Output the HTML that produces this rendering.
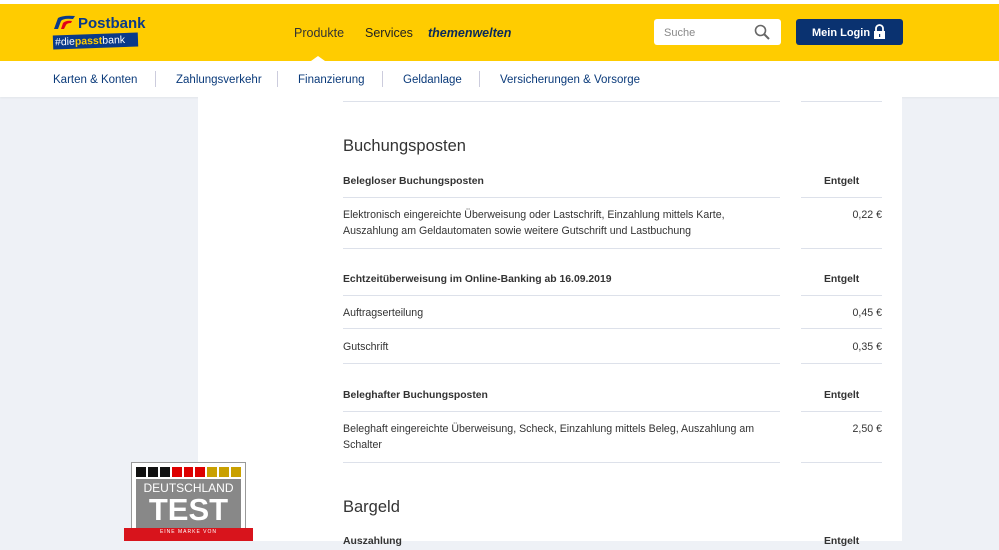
<!DOCTYPE html>
<html><head><meta charset="utf-8"><style>
*{margin:0;padding:0;box-sizing:border-box}
body{width:999px;height:541px;overflow:hidden;background:#eef1f6;font-family:"Liberation Sans",sans-serif;color:#333;position:relative}
.top{position:absolute;top:0;left:0;width:999px;height:4px;background:#fff}
.hdr{position:absolute;top:4px;left:0;width:999px;height:57px;background:#ffcc00}
.nav{position:absolute;top:61px;left:0;width:999px;height:36px;background:#fff;box-shadow:0 1px 2px rgba(0,0,0,.05)}
.nav span{position:absolute;top:13px;font-size:11.5px;color:#0a3a7a}
.sep{position:absolute;top:10px;width:1px;height:16px;background:#ccd}
.main{position:absolute;top:97px;left:198px;width:704px;height:444px;background:#fff}
.t{position:absolute;font-size:10.6px;color:#333;line-height:16px}
.b{font-weight:bold;font-size:10.4px}
.r{text-align:right;width:100px}
.l1{position:absolute;left:343px;width:437px;height:1px;background:#dde1ea}
.l2{position:absolute;left:801px;width:81px;height:1px;background:#dde1ea}
h2{position:absolute;font-weight:normal;font-size:16.5px;color:#333}
</style></head><body>
<div class="top"></div>
<div class="hdr">
 <svg style="position:absolute;left:53px;top:11px" width="22" height="14" viewBox="0 0 22 14"><path d="M1 14 L5 3 Q10 0 22 1 L20 4 Q10 3 8 6 L5 14Z" fill="#0a3a8a"/><path d="M8 14 L10 8 Q13 5 19 6 L18 8 Q14 8 13 10 L11 14Z" fill="#e2001a"/></svg>
 <div style="position:absolute;left:78px;top:11px;font-size:15px;font-weight:bold;color:#0a3a8a">Postbank</div>
 <div style="position:absolute;left:53px;top:30px;width:85px;height:14px;background:#0a3a8a;color:#fff;font-size:10.5px;line-height:14px;padding-left:2px;transform:rotate(-2deg)">#die<b style="color:#ffcc00">passt</b>bank</div>
 <div style="position:absolute;left:294px;top:22px;font-size:12.5px;color:#333">Produkte</div>
 <div style="position:absolute;left:311px;top:52px;width:0;height:0;border-left:7px solid transparent;border-right:7px solid transparent;border-bottom:5px solid #fff"></div>
 <div style="position:absolute;left:365px;top:22px;font-size:12.5px;color:#222">Services</div>
 <div style="position:absolute;left:428px;top:22px;font-size:12.5px;color:#0a2a5a;font-weight:bold;font-style:italic">themenwelten</div>
 <div style="position:absolute;left:654px;top:15px;width:127px;height:26px;background:#fff;border-radius:3px"><span style="position:absolute;left:10px;top:8px;font-size:11px;color:#888">Suche</span>
 <svg style="position:absolute;left:100px;top:5px" width="16" height="16" viewBox="0 0 16 16"><circle cx="6.5" cy="6.5" r="5" fill="none" stroke="#666" stroke-width="1.6"/><path d="M10 10 L15 15" stroke="#666" stroke-width="2"/></svg></div>
 <div style="position:absolute;left:796px;top:15px;width:107px;height:26px;background:#0a3270;border-radius:3px"><span style="position:absolute;left:16px;top:8px;font-size:11px;font-weight:bold;color:#fff">Mein Login</span>
 <svg style="position:absolute;left:77px;top:5px" width="13" height="15" viewBox="0 0 13 15"><path d="M3 7 V4.5 A3.5 3.5 0 0 1 10 4.5 V7" fill="none" stroke="#fff" stroke-width="1.8"/><rect x="1" y="7" width="11" height="8" fill="#fff"/><rect x="6" y="10" width="1.2" height="3" fill="#0a3270"/></svg></div>
</div>
<div class="nav">
 <span style="left:53px">Karten &amp; Konten</span><div class="sep" style="left:155px"></div>
 <span style="left:176px">Zahlungsverkehr</span><div class="sep" style="left:277px"></div>
 <span style="left:298px">Finanzierung</span><div class="sep" style="left:382px"></div>
 <span style="left:403px">Geldanlage</span><div class="sep" style="left:479px"></div>
 <span style="left:500px">Versicherungen &amp; Vorsorge</span>
</div>
<div class="main"></div>
<div class="l1" style="top:101px"></div><div class="l2" style="top:101px"></div>
<h2 style="left:343px;top:137px">Buchungsposten</h2>
<div class="t b" style="left:343px;top:174px">Belegloser Buchungsposten</div>
<div class="t b" style="left:824px;top:174px">Entgelt</div>
<div class="l1" style="top:197px"></div><div class="l2" style="top:197px"></div>
<div class="t" style="left:343px;top:207px">Elektronisch eingereichte Überweisung oder Lastschrift, Einzahlung mittels Karte,<br>Auszahlung am Geldautomaten sowie weitere Gutschrift und Lastbuchung</div>
<div class="t r" style="left:782px;top:207px">0,22 €</div>
<div class="l1" style="top:248px"></div><div class="l2" style="top:248px"></div>
<div class="t b" style="left:343px;top:272px">Echtzeitüberweisung im Online-Banking ab 16.09.2019</div>
<div class="t b" style="left:824px;top:272px">Entgelt</div>
<div class="l1" style="top:295px"></div><div class="l2" style="top:295px"></div>
<div class="t" style="left:343px;top:305px">Auftragserteilung</div><div class="t r" style="left:782px;top:305px">0,45 €</div>
<div class="l1" style="top:328px"></div><div class="l2" style="top:328px"></div>
<div class="t" style="left:343px;top:339px">Gutschrift</div><div class="t r" style="left:782px;top:339px">0,35 €</div>
<div class="l1" style="top:363px"></div><div class="l2" style="top:363px"></div>
<div class="t b" style="left:343px;top:388px">Beleghafter Buchungsposten</div>
<div class="t b" style="left:824px;top:388px">Entgelt</div>
<div class="l1" style="top:411px"></div><div class="l2" style="top:411px"></div>
<div class="t" style="left:343px;top:421px">Beleghaft eingereichte Überweisung, Scheck, Einzahlung mittels Beleg, Auszahlung am<br>Schalter</div>
<div class="t r" style="left:782px;top:421px">2,50 €</div>
<div class="l1" style="top:462px"></div><div class="l2" style="top:462px"></div>
<h2 style="left:343px;top:498px">Bargeld</h2>
<div class="t b" style="left:343px;top:534px">Auszahlung</div><div class="t b" style="left:824px;top:534px">Entgelt</div>
<div style="position:absolute;left:131px;top:462px;width:115px;height:79px;background:#fff;border:1px solid #999">
 <div style="position:absolute;left:4px;top:4px;width:105px;height:10px;display:flex;gap:2px">
  <i style="flex:1;background:#111"></i><i style="flex:1;background:#111"></i><i style="flex:1;background:#111"></i><i style="flex:1;background:#d00"></i><i style="flex:1;background:#d00"></i><i style="flex:1;background:#d00"></i><i style="flex:1;background:#c9a000"></i><i style="flex:1;background:#c9a000"></i><i style="flex:1;background:#c9a000"></i></div>
 <div style="position:absolute;left:4px;top:16px;width:105px;height:60px;background:#888;color:#fff;text-align:center">
  <div style="font-size:12px;line-height:14px;margin-top:2px">DEUTSCHLAND</div>
  <div style="font-size:31px;font-weight:bold;line-height:30px">TEST</div></div>
</div>
<div style="position:absolute;left:124px;top:528px;width:129px;height:13px;background:#d8141c;color:#fff;font-size:5px;text-align:center;line-height:9px;letter-spacing:1px">EINE MARKE VON</div>
</body></html>
